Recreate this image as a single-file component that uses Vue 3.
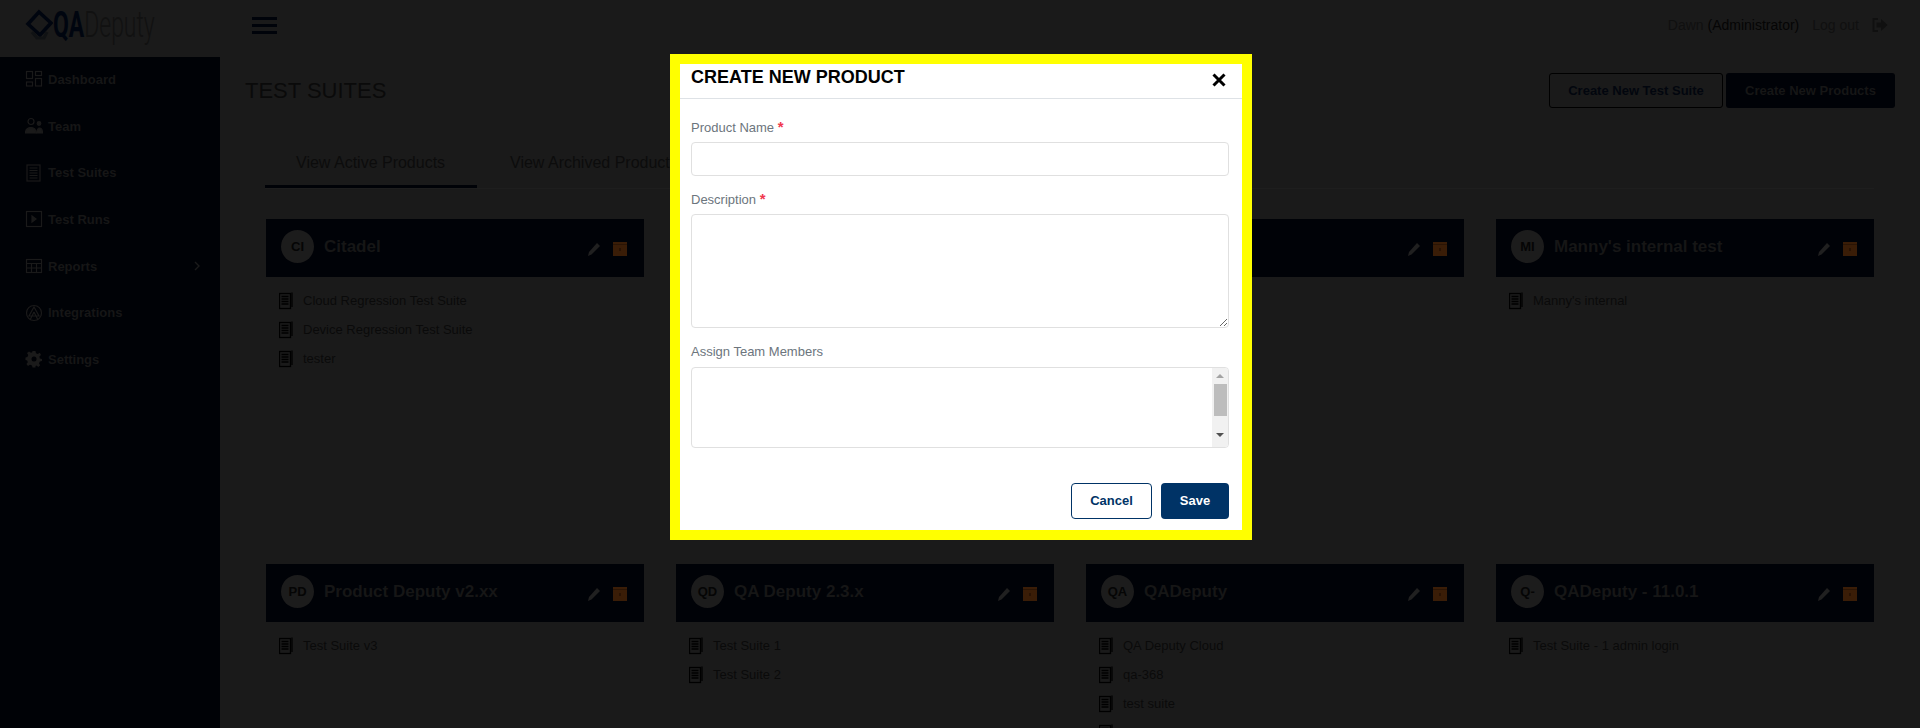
<template>
  <div class="page">
    <header class="topbar">
      <div class="logo">
        <svg class="logo-mark" width="28" height="32" viewBox="0 0 28 32">
          <path d="M14 3 L26 14 L15 26 L3 15 Z" fill="none" stroke="#00050f" stroke-width="3.5" />
          <path d="M7 23 L12 29 L19 29 L22 23" fill="none" stroke="#101214" stroke-width="3" />
        </svg>
        <span class="logo-text"><b>QA</b>Deputy</span>
      </div>
      <button class="burger"><span></span><span></span><span></span></button>
      <div class="user">
        <span class="user-name">Dawn <em>(Administrator)</em></span>
        <span class="logout">Log out</span>
        <svg width="16" height="14" viewBox="0 0 16 14">
          <path d="M6 1 H1.5 V13 H6" fill="none" stroke="#101010" stroke-width="2" />
          <path d="M4.500 4.500 H9 V1 L15.500 7 L9 13 V9.500 H4.500 Z" fill="#101010" />
        </svg>
      </div>
    </header>

    <div class="layout">
      <nav class="sidebar">
        <a v-for="item in menu" :key="item.label" class="nav-item">
          <svg class="nav-icon" width="18" height="18" viewBox="0 0 18 18" fill="none" stroke="#1a1a1a" stroke-width="1.2" v-html="item.icon"></svg>
          <span>{{ item.label }}</span>
          <svg v-if="item.arrow" class="nav-arrow" width="6" height="10" viewBox="0 0 6 10">
            <path d="M1 1 L5 5 L1 9" fill="none" stroke="#1a1a1a" stroke-width="1.4" />
          </svg>
        </a>
      </nav>

      <main class="content">
        <div class="title-row">
          <h1>TEST SUITES</h1>
          <div class="actions">
            <button class="btn-outline">Create New Test Suite</button>
            <button class="btn-solid">Create New Products</button>
          </div>
        </div>

        <div class="tabs">
          <a class="tab active">View Active Products</a>
          <a class="tab">View Archived Products</a>
        </div>

        <div class="cards">
          <section v-for="(card, i) in cards" :key="i" class="card">
            <div class="card-head">
              <span v-if="card.name" class="avatar">{{ card.initials }}</span>
              <span class="card-title">{{ card.name }}</span>
              <svg class="pencil" width="14" height="15" viewBox="0 0 14 15">
                <path d="M10 1 L13 4 L4.5 12.5 L1 14 L2 10 Z" fill="#202020" />
              </svg>
              <svg class="trash" width="14" height="14" viewBox="0 0 14 14">
                <path d="M0 0 H14 V14 H0 Z" fill="#3a1d07" />
                <path d="M0 2.500 H14" stroke="#2b1505" stroke-width="1" />
                <path d="M6 6 H8 V9 H6 Z" fill="#291304" />
              </svg>
            </div>
            <ul class="suites">
              <li v-for="suite in card.suites" :key="suite">
                <svg width="14" height="18" viewBox="0 0 14 18" fill="none" stroke="#000">
                  <rect x="0.5" y="1.5" width="11" height="15" stroke-width="1.3" />
                  <path d="M13 0.5 V15 M2.5 4.5 H9.5 M2.5 7 H9.5 M2.5 9.5 H9.5 M2.5 12 H9.5" stroke-width="1.3" />
                </svg>
                <span>{{ suite }}</span>
              </li>
            </ul>
          </section>
        </div>
      </main>
    </div>

    <div class="backdrop">
      <form class="modal" @submit.prevent>
        <div class="modal-head">
          <h2>CREATE NEW PRODUCT</h2>
          <svg width="14" height="14" viewBox="0 0 14 14">
            <path d="M1.5 1.5 L12.5 12.5 M12.5 1.5 L1.5 12.5" stroke="#000" stroke-width="3" />
          </svg>
        </div>
        <div class="modal-body">
          <label class="low">Product Name <i>*</i></label>
          <input type="text" class="field" />
          <label class="low">Description <i>*</i></label>
          <textarea class="field area"></textarea>
          <label>Assign Team Members</label>
          <div class="field members">
            <div class="scrollbar">
              <span class="arrow up"></span>
              <span class="thumb"></span>
              <span class="arrow down"></span>
            </div>
          </div>
          <div class="modal-actions">
            <button class="cancel">Cancel</button>
            <button class="save">Save</button>
          </div>
        </div>
      </form>
    </div>
  </div>
</template>

<script setup>
const gear = 'M7.500 1 H10.500 L11 3.200 L12.800 4 L14.800 2.800 L16 5 L14.400 6.600 L14.800 8.500 L17 9 V11 L14.800 11.500 L14 13.400 L15.200 15.300 L13.300 17 L11.500 15.600 L10.500 16 V17.500 H7.500 L7 15.600 L5 14.800 L3 16 L1.400 14 L2.800 12.300 L2.200 10.500 L0.500 10 V7.500 L2.400 7 L3.200 5 L2 3 L4 1.400 L6 2.800 L7.200 2.300 Z'

const menu = [
  { label: 'Dashboard', icon: '<rect x="1.5" y="1.5" width="6" height="7"/><rect x="10.5" y="1.5" width="6" height="4"/><rect x="1.5" y="12" width="6" height="4"/><rect x="10.5" y="8.5" width="6" height="7.5"/>' },
  { label: 'Team', icon: '<circle cx="6" cy="4.500" r="3"/><path d="M0.500 16 C0.500 12 3 10.500 6 10.500 C9 10.500 11 12 11 16 Z" fill="#1a1a1a"/><circle cx="14" cy="6.500" r="1.800" fill="#1a1a1a"/><path d="M11.500 16 C12 12.500 13 11 14.500 11 C16 11 17.500 12.500 17.500 16 Z" fill="#1a1a1a"/>' },
  { label: 'Test Suites', icon: '<rect x="2" y="1" width="13" height="16"/><path d="M4.5 4 H12.5 M4.5 6.5 H12.5 M4.5 9 H12.5 M4.5 11.500 H12.5 M4.5 14 H12.5"/>' },
  { label: 'Test Runs', icon: '<rect x="1.500" y="1.500" width="15" height="15"/><path d="M7 6 L11 9 L7 12 Z" fill="#1a1a1a"/>' },
  { label: 'Reports', arrow: true, icon: '<rect x="1.500" y="2.500" width="15" height="13"/><path d="M1.500 6.500 H16.500 M1.500 11 H16.500 M6.500 6.500 V15.500 M11.500 6.500 V15.500"/>' },
  { label: 'Integrations', icon: '<circle cx="9" cy="9" r="7.500"/><path d="M9 3 L14 12 L4 12 Z M9 8 L5 16 M9 8 L13 16"/>' },
  { label: 'Settings', icon: `<path d="${gear}" fill="#1a1a1a" stroke="none"/><circle cx="9" cy="9" r="2.500" fill="#000206" stroke="none"/>` },
];

// the two middle cards of the first row sit fully behind the modal
const cards = [
  { name: 'Citadel', initials: 'CI', suites: ['Cloud Regression Test Suite', 'Device Regression Test Suite', 'tester'] },
  { name: '', suites: [] },
  { name: '', suites: [] },
  { name: "Manny's internal test", initials: 'MI', suites: ["Manny's internal"] },
  { name: 'Product Deputy v2.xx', initials: 'PD', suites: ['Test Suite v3'] },
  { name: 'QA Deputy 2.3.x', initials: 'QD', suites: ['Test Suite 1', 'Test Suite 2'] },
  { name: 'QADeputy', initials: 'QA', suites: ['QA Deputy Cloud', 'qa-368', 'test suite', 'qa-new-368'] },
  { name: 'QADeputy - 11.0.1', initials: 'Q-', suites: ['Test Suite - 1 admin login'] },
];
</script>

<style>
html, body {
  margin: 0;
  height: 100%;
  overflow: hidden;
  background: #1a1a1a;
}
</style>

<style scoped>
.page {
  height: 728px;
  overflow: hidden;
  display: flex;
  flex-direction: column;
  font-family: "Liberation Sans", Arial, sans-serif;
  color: #0a0a0a;
  background: #1a1a1a;
}

.topbar {
  flex: none;
  height: 57px;
  box-sizing: border-box;
  padding-bottom: 7px;
  display: flex;
  align-items: center;
}

.logo {
  width: 252px;
  padding-left: 25px;
  box-sizing: border-box;
  display: flex;
  align-items: center;
  gap: 0;
}

.logo-text {
  display: inline-block;
  font-family: "Roboto", sans-serif;
  font-size: 37px;
  font-weight: 300;
  line-height: 40px;
  color: #111;
  transform: scaleX(0.62);
  transform-origin: left center;
  white-space: nowrap;
}

.logo-text b {
  font-weight: 700;
  color: #00050f;
}

.burger {
  width: 25px;
  padding: 0;
  border: 0;
  background: none;
  display: flex;
  flex-direction: column;
  gap: 4px;
}

.burger span {
  height: 3px;
  background: #00030a;
}

.user {
  margin-left: auto;
  padding-right: 32px;
  display: flex;
  align-items: center;
  font-size: 14px;
  color: #101010;
}

.user-name em {
  font-style: normal;
  color: #050505;
}

.logout {
  margin: 0 13px 0 13px;
}

.layout {
  flex: 1;
  display: flex;
  min-height: 0;
}

.sidebar {
  width: 220px;
  flex: none;
  background: #000206;
}

.nav-item {
  height: 46.7px;
  padding: 0 20px 2px 25px;
  box-sizing: border-box;
  display: flex;
  align-items: center;
  gap: 5px;
  font-size: 13px;
  font-weight: 700;
  color: #161616;
}

.nav-arrow {
  margin-left: auto;
}

.content {
  flex: 1;
  padding: 16px 25px 0;
  min-width: 0;
}

.title-row {
  display: flex;
  justify-content: space-between;
  align-items: center;
  height: 35px;
}

h1 {
  margin: 0;
  font-size: 22px;
  font-weight: 400;
}

.actions {
  display: flex;
  gap: 3px;
}

.actions button {
  height: 35px;
  border-radius: 3px;
  font: 700 13px "Liberation Sans", Arial, sans-serif;
}

.btn-outline {
  width: 174px;
  border: 1px solid #000;
  background: none;
  color: #02060e;
}

.btn-solid {
  width: 169px;
  border: 0;
  background: #000207;
  color: #161616;
}

.tabs {
  margin: 32px 0 0 20px;
  width: 1609px;
  display: flex;
  gap: 2px;
  border-bottom: 1px solid #1e1e1e;
  height: 48px;
}

.tab {
  box-sizing: border-box;
  height: 48px;
  padding: 14px 31px 0;
  font-size: 16px;
  line-height: 18px;
  color: #0c0c0c;
}

.tab.active {
  width: 212px;
  border-bottom: 3px solid #000207;
}

.cards {
  margin: 30px 0 0 21px;
  display: grid;
  grid-template-columns: repeat(4, 378px);
  grid-auto-rows: 345px;
  column-gap: 32px;
}

.card-head {
  height: 58px;
  padding: 0 17px 0 15px;
  box-sizing: border-box;
  display: flex;
  align-items: center;
  background: #000207;
}

.avatar {
  width: 33px;
  height: 33px;
  margin: -3px 10px 0 0;
  border-radius: 50%;
  display: flex;
  align-items: center;
  justify-content: center;
  background: #1c1c1c;
  font-size: 13px;
  font-weight: 700;
  color: #050505;
}

.card-title {
  flex: 1;
  margin-top: -2px;
  font-size: 17px;
  font-weight: 700;
  color: #161616;
}

.pencil {
  margin: 2px 12px 0 0;
}

.trash {
  margin-top: 2px;
}

.suites {
  margin: 9px 0 0 13px;
  padding: 0;
  list-style: none;
}

.suites li {
  height: 29px;
  display: flex;
  align-items: center;
  gap: 10px;
  font-size: 13px;
  color: #0a0a0a;
}

.backdrop {
  position: fixed;
  inset: 0;
  display: flex;
  justify-content: center;
  align-items: flex-start;
  padding: 54px 0 0 2px;
}

.modal {
  width: 582px;
  height: 486px;
  box-sizing: border-box;
  border: 10px solid #ffff00;
  background: #fff;
}

.modal-head {
  height: 35px;
  box-sizing: border-box;
  padding: 3px 16px 0 11px;
  display: flex;
  justify-content: space-between;
  border-bottom: 1px solid #dee2e6;
}

.modal-head svg {
  margin-top: 6px;
}

h2 {
  margin: 0;
  font-size: 18px;
  line-height: 20px;
  color: #000;
}

.modal-body {
  padding: 20px 13px 0 11px;
  display: flex;
  flex-direction: column;
}

label {
  font-size: 13px;
  line-height: 16px;
  color: #6c757d;
}

label.low {
  padding-top: 1px;
  margin-bottom: -1px;
}

label i {
  font-style: normal;
  font-weight: 700;
  font-size: 15px;
  line-height: 14px;
  color: #f0384f;
}

.field {
  display: block;
  box-sizing: border-box;
  width: 100%;
  height: 34px;
  margin: 7px 0 15px;
  border: 1px solid #e0e0e0;
  border-radius: 4px;
  background: #fff;
  outline: none;
}

.area {
  height: 114px;
  margin-bottom: 16px;
}

.members {
  height: 81px;
  margin-bottom: 35px;
  display: flex;
  justify-content: flex-end;
  overflow: hidden;
}

.scrollbar {
  width: 16px;
  display: flex;
  flex-direction: column;
  align-items: center;
  background: #f1f1f1;
}

.arrow {
  width: 0;
  height: 0;
  border-left: 4px solid transparent;
  border-right: 4px solid transparent;
}

.arrow.up {
  margin-top: 6px;
  border-bottom: 4px solid #a3a3a3;
}

.thumb {
  width: 13px;
  height: 32px;
  margin-top: 6px;
  background: #bdbdbd;
}

.arrow.down {
  margin-top: 17px;
  border-top: 4px solid #505050;
}

.modal-actions {
  display: flex;
  justify-content: flex-end;
  gap: 9px;
}

.modal-actions button {
  height: 36px;
  padding-bottom: 2px;
  border-radius: 4px;
  font: 700 13px "Liberation Sans", Arial, sans-serif;
}

.cancel {
  width: 81px;
  border: 1px solid #003366;
  background: #fff;
  color: #003366;
}

.save {
  width: 68px;
  border: 0;
  background: #003366;
  color: #fff;
}
</style>
